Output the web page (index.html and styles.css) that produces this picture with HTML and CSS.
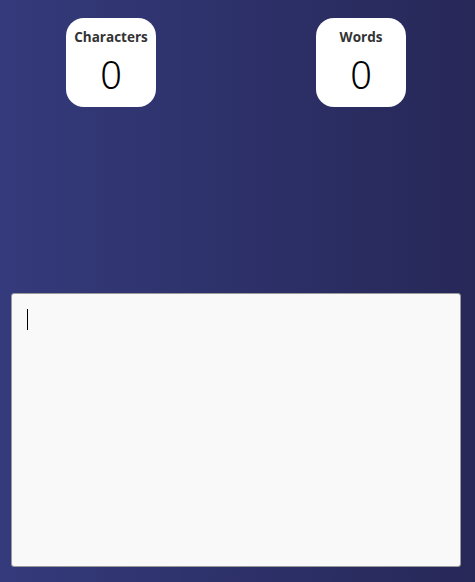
FILE: index.html
```html
<!DOCTYPE html>
<html>
<head>
<meta charset="utf-8">
<link rel="stylesheet" href="styles.css">
</head>
<body>
<div class="stats">
  <div class="card">
    <div class="label">Characters</div>
    <div class="value">0</div>
  </div>
  <div class="card">
    <div class="label">Words</div>
    <div class="value">0</div>
  </div>
</div>
<div class="editor">
  <textarea class="input"></textarea>
  <span class="caret"></span>
</div>
</body>
</html>
```

FILE: styles.css
```css
html, body {
  margin: 0;
  height: 100%;
}
body {
  background: linear-gradient(to right, #343a7b, #272858);
  font-family: "Open Sans", "Noto Sans", sans-serif;
  display: flex;
  flex-direction: column;
  box-sizing: border-box;
  padding: 18px 14px 15px 11px;
}
.stats {
  display: flex;
  justify-content: space-between;
  padding: 0 55px;
}
.card {
  width: 90px;
  height: 89px;
  background: #fff;
  border-radius: 18px;
  box-sizing: border-box;
  display: flex;
  flex-direction: column;
  align-items: center;
  padding-top: 9px;
}
.label {
  font-size: 13.5px;
  font-weight: 700;
  color: #333;
  line-height: 20px;
}
.value {
  font-family: "Noto Sans", sans-serif;
  font-size: 38px;
  font-weight: 300;
  color: #000;
  line-height: 40px;
  margin-top: 7px;
}
.editor {
  margin-top: 186px;
  flex: 1;
  display: flex;
  position: relative;
}
.input {
  flex: 1;
  margin: 0;
  background: #f9f9f9;
  border: 1px solid #9a9a9a;
  border-radius: 3px;
  padding: 14px 15px;
  font-family: "Open Sans", sans-serif;
  font-size: 16px;
  resize: none;
  outline: none;
}
.caret {
  position: absolute;
  left: 16px;
  top: 16px;
  width: 1px;
  height: 21px;
  background: #000;
}
```
